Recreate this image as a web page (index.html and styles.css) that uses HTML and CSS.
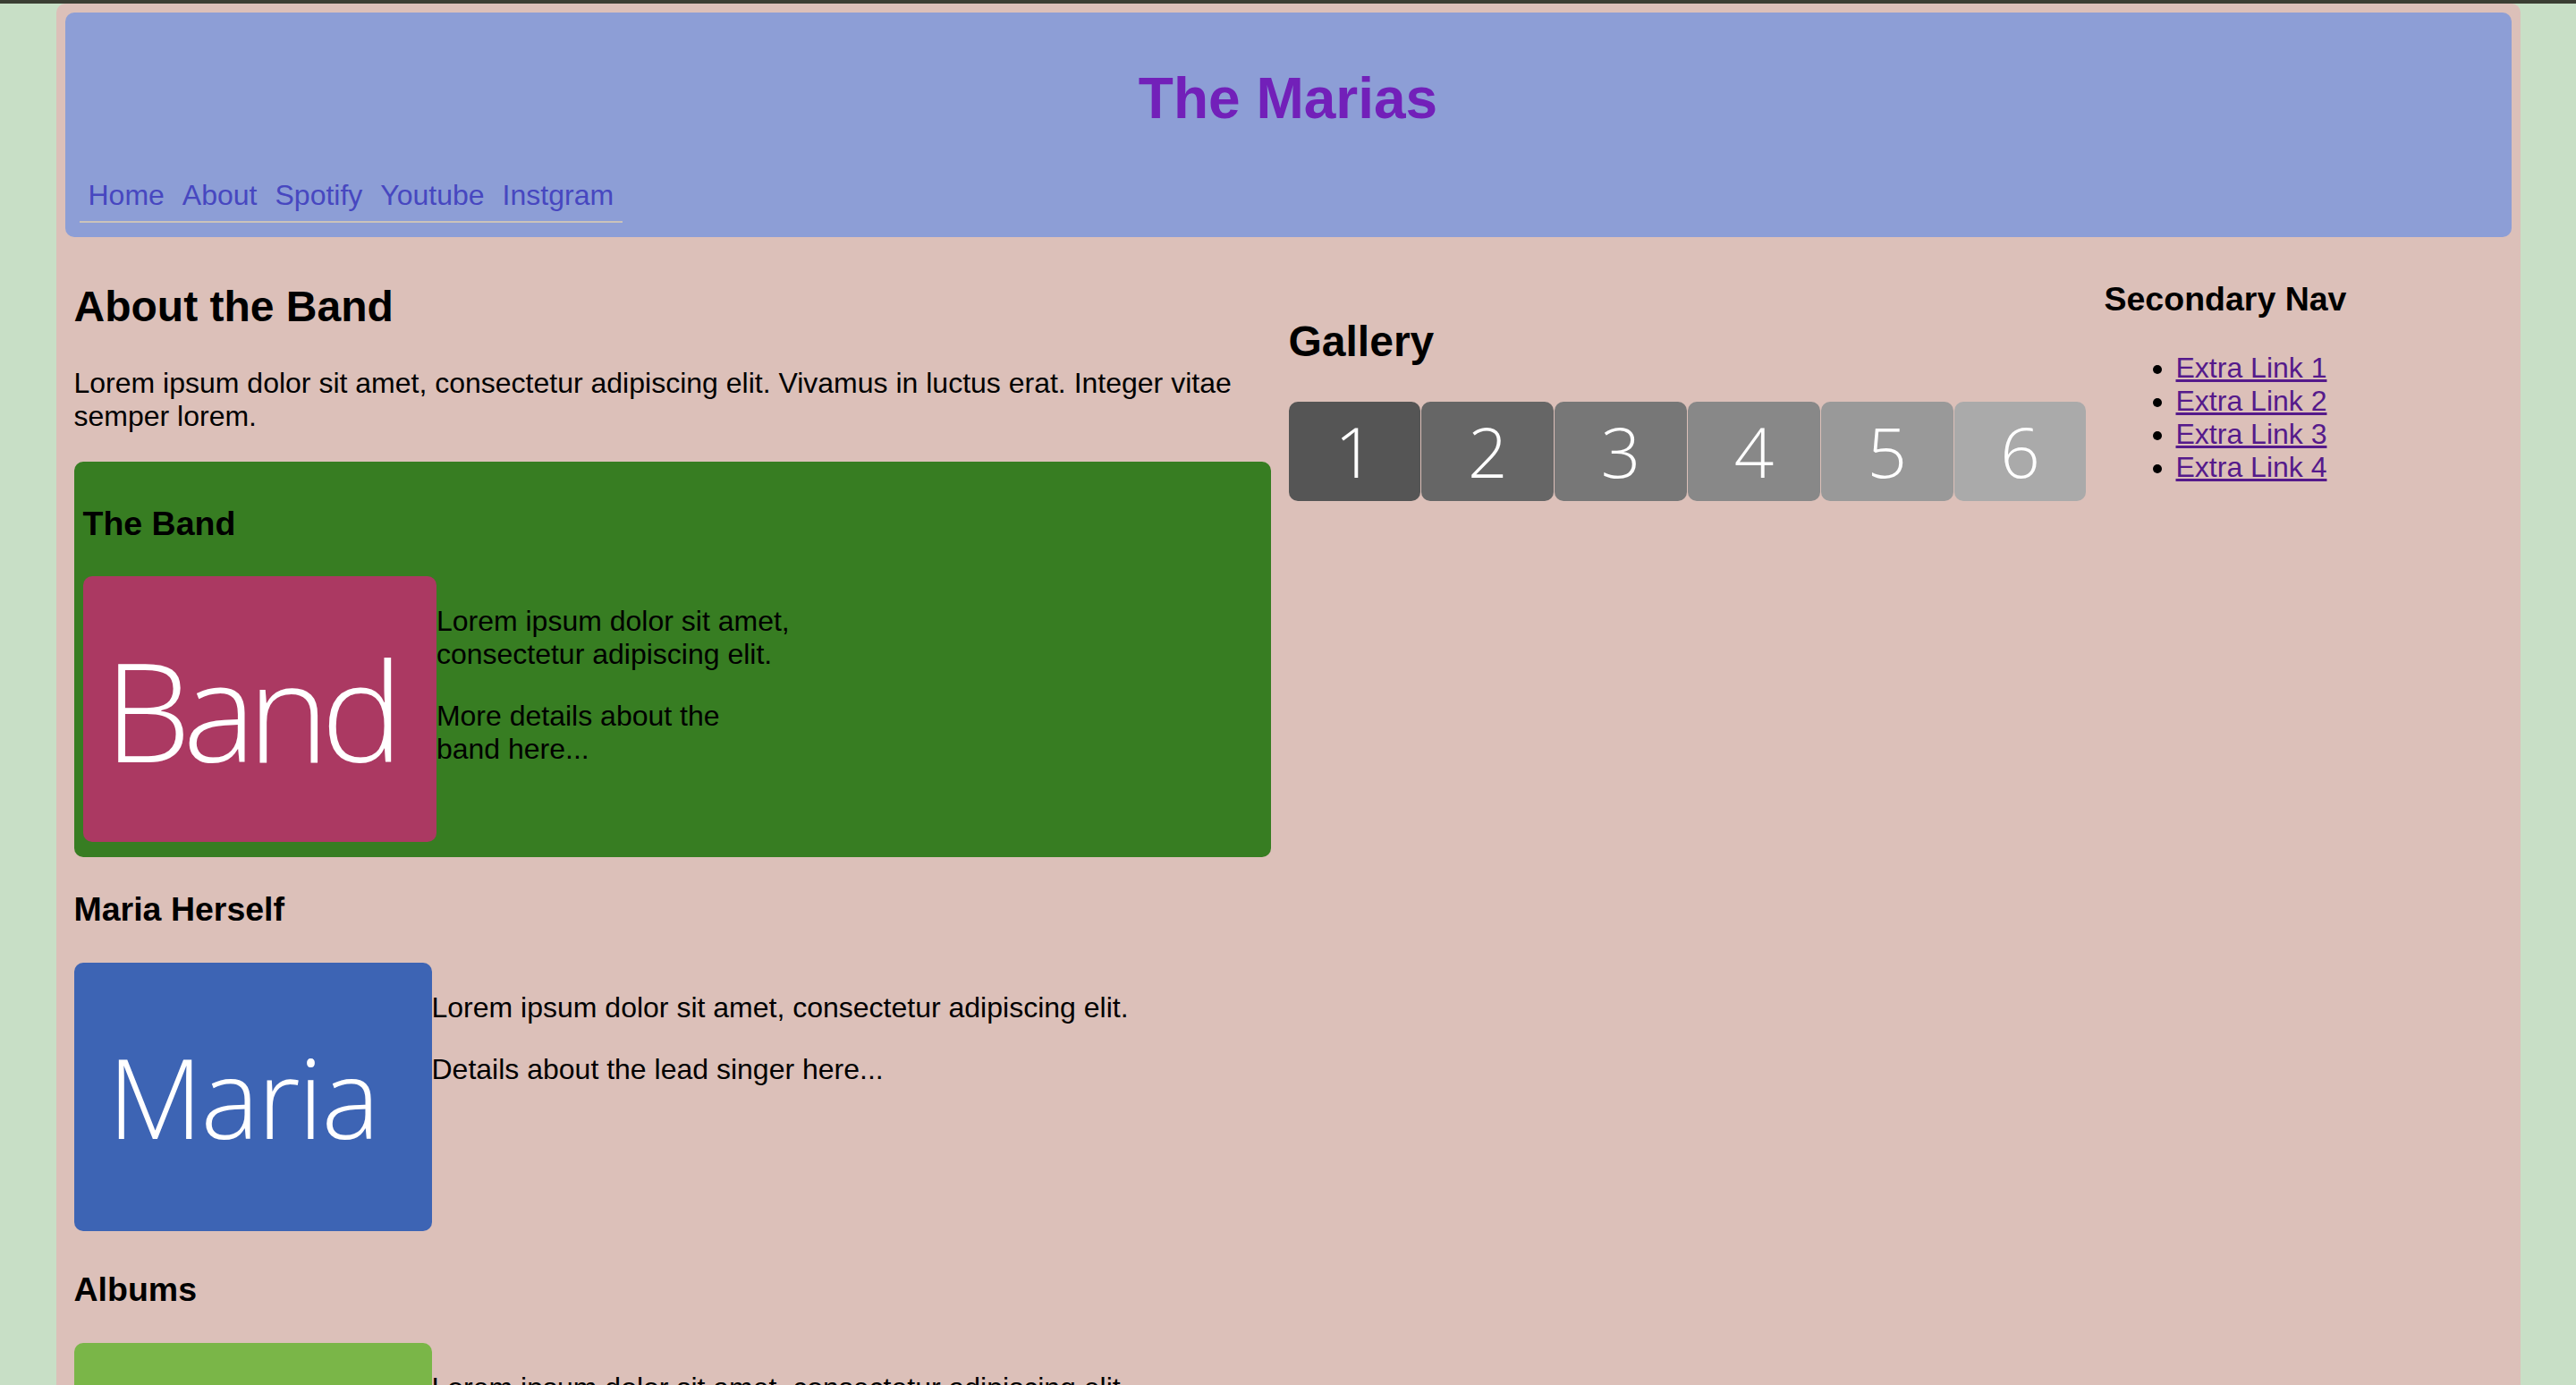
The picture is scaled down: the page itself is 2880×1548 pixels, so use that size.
FILE: index.html
```html
<!DOCTYPE html>
<html lang="en">
<head>
<meta charset="utf-8">
<title>The Marias</title>
<link rel="stylesheet" href="styles.css">
</head>
<body>
<div class="page">
  <header class="site-header">
    <h1 class="site-title">The Marias</h1>
    <nav>
      <ul class="main-nav">
        <li><a href="#">Home</a></li>
        <li><a href="#">About</a></li>
        <li><a href="#">Spotify</a></li>
        <li><a href="#">Youtube</a></li>
        <li><a href="#">Instgram</a></li>
      </ul>
    </nav>
  </header>

  <div class="layout">
    <main class="content">
      <h2>About the Band</h2>
      <p>Lorem ipsum dolor sit amet, consectetur adipiscing elit. Vivamus in luctus erat. Integer vitae semper lorem.</p>

      <section class="card">
        <h3>The Band</h3>
        <div class="media">
          <div class="media-figure media-figure-fluid">
            <div class="ph ph-band">Band</div>
          </div>
          <div class="media-text media-text-narrow">
            <p>Lorem ipsum dolor sit amet, consectetur adipiscing elit.</p>
            <p>More details about the band here...</p>
          </div>
        </div>
      </section>

      <section class="block">
        <h3>Maria Herself</h3>
        <div class="media">
          <div class="media-figure">
            <div class="ph ph-maria">Maria</div>
          </div>
          <div class="media-text">
            <p>Lorem ipsum dolor sit amet, consectetur adipiscing elit.</p>
            <p>Details about the lead singer here...</p>
          </div>
        </div>
      </section>

      <section class="block">
        <h3>Albums</h3>
        <div class="media">
          <div class="media-figure">
            <div class="ph ph-albums">Albums</div>
          </div>
          <div class="media-text">
            <p>Lorem ipsum dolor sit amet, consectetur adipiscing elit.</p>
            <p>Details about the albums here...</p>
          </div>
        </div>
      </section>
    </main>

    <section class="gallery">
      <h2>Gallery</h2>
      <div class="tiles">
        <div class="tile tile-1">1</div>
        <div class="tile tile-2">2</div>
        <div class="tile tile-3">3</div>
        <div class="tile tile-4">4</div>
        <div class="tile tile-5">5</div>
        <div class="tile tile-6">6</div>
      </div>
    </section>

    <aside class="side-nav">
      <h3>Secondary Nav</h3>
      <ul>
        <li><a href="#">Extra Link 1</a></li>
        <li><a href="#">Extra Link 2</a></li>
        <li><a href="#">Extra Link 3</a></li>
        <li><a href="#">Extra Link 4</a></li>
      </ul>
    </aside>
  </div>
</div>
</body>
</html>
```

FILE: styles.css
```css
* {
  box-sizing: border-box;
}

html {
  background: #c8dfc6;
}

body {
  margin: 0;
  border-top: 4px solid #3b3e33;
  background: #c8dfc6;
  font-family: "Liberation Sans", Arial, sans-serif;
  font-size: 32px;
  color: #000;
}

.page {
  width: 2755px;
  min-height: 1600px;
  margin: 0 auto;
  padding: 10px;
  background: #dcc0b9;
  border-radius: 10px 10px 0 0;
}

/* Header */
.site-header {
  background: #8d9ed6;
  border-radius: 10px;
  padding: 16px;
}

.site-title {
  margin: 43px 0;
  text-align: center;
  font-size: 64px;
  font-weight: bold;
  color: #7220b9;
}

.main-nav {
  display: flex;
  width: max-content;
  margin: 0;
  padding: 0;
  list-style: none;
  border-bottom: 2px solid #cbc3ba;
}

.main-nav a {
  display: block;
  padding: 10px;
  color: #4747c0;
  text-decoration: none;
}

/* Layout */
.layout {
  display: grid;
  grid-template-columns: 1338px 892px 1fr;
  column-gap: 20px;
  align-items: start;
  padding: 10px 10px 0;
}

h2 {
  font-size: 48px;
  margin: 40px 0;
}

h3 {
  font-size: 37.5px;
  margin: 37.5px 0;
}

p {
  margin: 32px 0;
}

/* Cards and media rows */
.card {
  background: #377d22;
  border-radius: 10px;
  padding: 10px;
  margin: 32px 0;
}

.media {
  display: flex;
  align-items: flex-start;
}

.media-figure {
  flex: 0 0 400px;
  padding-bottom: 7px;
}

.media-figure-fluid {
  flex: 0 0 30%;
}

.media-text {
  flex: 1 1 auto;
}

.media-text-narrow {
  flex: 0 0 30%;
}

.ph {
  display: flex;
  align-items: center;
  justify-content: center;
  width: 100%;
  aspect-ratio: 4 / 3;
  border-radius: 10px;
  color: #fff;
  font-family: "Open Sans", "Noto Sans", sans-serif;
  font-weight: 200;
  line-height: 1;
}

.ph-band {
  background: #ab3962;
  font-size: 154px;
  letter-spacing: -9px;
  padding-right: 22px;
}

.ph-maria {
  background: #3d64b4;
  font-size: 123px;
  letter-spacing: -2px;
  padding-right: 22px;
}

.ph-albums {
  background: #7ab648;
  font-size: 110px;
}

/* Gallery */
.gallery {
  padding-top: 39px;
}

.tiles {
  display: grid;
  grid-template-columns: repeat(6, 1fr);
  column-gap: 1px;
}

.tile {
  display: flex;
  align-items: center;
  justify-content: center;
  aspect-ratio: 4 / 3;
  border-radius: 10px;
  color: #fff;
  font-family: "Open Sans", "Noto Sans", sans-serif;
  font-weight: 200;
  font-size: 78px;
  line-height: 1;
}

.tile-1 { background: #555555; }
.tile-2 { background: #666666; }
.tile-3 { background: #777777; }
.tile-4 { background: #888888; }
.tile-5 { background: #999999; }
.tile-6 { background: #aaaaaa; }

/* Secondary nav */
.side-nav ul {
  margin: 32px 0;
  padding-left: 80px;
}

.side-nav a {
  color: #551a8b;
}
```
